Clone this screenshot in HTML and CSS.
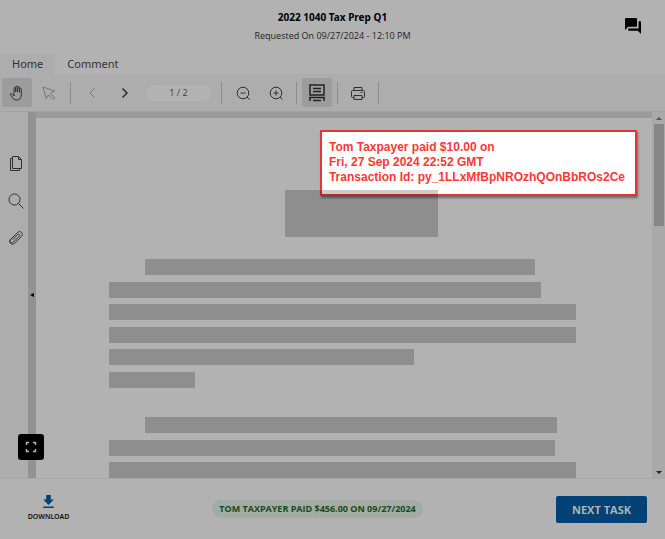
FILE: index.html
```html
<!DOCTYPE html>
<html lang="en">
<head>
    <meta charset="UTF-8">
    <meta name="viewport" content="width=device-width, initial-scale=1.0">
    <title>2022 1040 Tax Prep Q1</title>
    <link rel="stylesheet" href="styles.css">
</head>
<body>
    <header class="header">
        <div class="header-text">
            <h1>2022 1040 Tax Prep Q1</h1>
            <p>Requested On 09/27/2024 - 12:10 PM</p>
        </div>
        <button type="button" class="chat-button" aria-label="Messages">
            <svg width="16" height="16" viewBox="2 2 20 20" fill="#000"><path d="M21 6h-2v9H6v2c0 .55.45 1 1 1h11l4 4V7c0-.55-.45-1-1-1zm-4 6V3c0-.55-.45-1-1-1H3c-.55 0-1 .45-1 1v14l4-4h10c.55 0 1-.45 1-1z"/></svg>
        </button>
    </header>

    <nav class="tabs">
        <button type="button" class="tab active">Home</button>
        <button type="button" class="tab">Comment</button>
    </nav>

    <div class="toolbar">
        <button type="button" class="tool selected" aria-label="Hand">
            <svg width="16" height="16" viewBox="0 0 16 16"><path d="M5 9.500V3.600c0-1.400 1.700-1.400 1.700 0V7 2.200c0-1.500 1.900-1.500 1.900 0V7 2.700c0-1.400 1.900-1.400 1.900 0v4.600-3c0-1.300 1.800-1.300 1.800 0v5.500c0 3.200-1.500 5.200-4.500 5.200-2.200 0-3.400-.9-4.500-2.600L1.600 9.900c-.7-1.200.8-2 1.700-.9L5 11z"/></svg>
        </button>
        <button type="button" class="tool faded" aria-label="Select">
            <svg width="16" height="16" viewBox="0 0 16 16"><path d="M2 2l11.500 4-4.300 2.400 4.600 4.500-1.700 1.700-4.500-4.700-2.300 4z"/></svg>
        </button>
        <span class="divider first"></span>
        <button type="button" class="tool faded" aria-label="Previous page">
            <svg width="16" height="16" viewBox="0 0 16 16"><path d="M10.500 3.500L6 8l4.500 4.500"/></svg>
        </button>
        <button type="button" class="tool next" aria-label="Next page">
            <svg width="16" height="16" viewBox="0 0 16 16"><path d="M5.500 3.500L10 8l-4.500 4.500"/></svg>
        </button>
        <input type="text" class="page-input" value="1 / 2" aria-label="Page">
        <span class="divider"></span>
        <button type="button" class="tool zoom-tool" aria-label="Zoom out">
            <svg width="16" height="16" viewBox="0 0 16 16"><circle cx="8" cy="8" r="5.800"/><path d="M5.500 8h5M12 12l2.500 2.500"/></svg>
        </button>
        <button type="button" class="tool zoom-tool" aria-label="Zoom in">
            <svg width="16" height="16" viewBox="0 0 16 16"><circle cx="8" cy="8" r="5.800"/><path d="M5.500 8h5M8 5.500v5M12 12l2.500 2.500"/></svg>
        </button>
        <span class="divider"></span>
        <button type="button" class="tool selected scroll-tool" aria-label="Continuous scroll">
            <svg width="18" height="18" viewBox="0 0 18 18"><path d="M2 1h14v10H2zM5 4.500h8M5 7.500h8M1 13.500h16M2 17v-3.500M16 17v-3.500M5 16.500h8"/></svg>
        </button>
        <span class="divider"></span>
        <button type="button" class="tool print-tool" aria-label="Print">
            <svg width="16" height="16" viewBox="0 0 16 16"><path d="M4 5.500v-3h8v3M4 12.500H2.500c-.6 0-1-.4-1-1v-5c0-.6.400-1 1-1h11c.6 0 1 .4 1 1v5c0 .6-.4 1-1 1H12M4 10.500h8v4H4zM10.500 7.500h2"/></svg>
        </button>
        <span class="divider last"></span>
    </div>

    <main class="viewer">
        <aside class="sidebar">
            <button type="button" class="side-button" aria-label="Pages">
                <svg width="16" height="16" viewBox="0 0 16 16"><path d="M4.500 .5h6l3 3v9h-9zM10.500 .5v3h3M4.500 2.500h-2v12h9v-2"/></svg>
            </button>
            <button type="button" class="side-button" aria-label="Search">
                <svg width="16" height="16" viewBox="0 0 16 16"><circle cx="6.500" cy="6.500" r="5.500"/><path d="M10.500 10.500l5 5"/></svg>
            </button>
            <button type="button" class="side-button" aria-label="Attachments">
                <svg width="16" height="16" viewBox="0 0 16 16"><path d="M4.500 9.700L9.700 4.500c1.100-1.100 2.700.5 1.600 1.600l-6 6c-2 2-4.700-.7-2.700-2.700l6.700-6.700c3.100-3 6.900.9 4 3.900l-6.500 6.500c-2.900 2.900-7-.8-4.300-3.900"/></svg>
            </button>
            <button type="button" class="expand-button" aria-label="Full screen">
                <svg width="12" height="12" viewBox="0 0 12 12"><path d="M1.500 4V1.500H4M8 1.500h2.500V4M10.500 8v2.500H8M4 10.500H1.500V8"/></svg>
            </button>
        </aside>
        <div class="splitter"><span class="splitter-arrow"></span></div>

        <div class="document">
            <div class="stamp">
                Tom Taxpayer paid $10.00 on<br>
                Fri, 27 Sep 2024 22:52 GMT<br>
                Transaction Id: py_1LLxMfBpNROzhQOnBbROs2Ce
            </div>
            <div class="title-block"></div>
            <div class="paragraph">
                <div class="line indent w-390"></div>
                <div class="line w-432"></div>
                <div class="line"></div>
                <div class="line"></div>
                <div class="line w-305"></div>
                <div class="line w-86"></div>
            </div>
            <div class="paragraph short">
                <div class="line indent w-412"></div>
                <div class="line w-446"></div>
                <div class="line"></div>
            </div>
        </div>

        <div class="scrollbar">
            <span class="arrow-up"></span>
            <div class="thumb"></div>
            <span class="arrow-down"></span>
        </div>
    </main>

    <footer class="footer">
        <button type="button" class="download-button">
            <svg width="11" height="13" viewBox="0 0 14 17" fill="#004276"><path d="M14 6h-4V0H4v6H0l7 7zM0 15v2h14v-2z"/></svg>
            DOWNLOAD
        </button>
        <span class="badge">TOM TAXPAYER PAID $456.00 ON 09/27/2024</span>
        <button type="button" class="next-button">NEXT TASK</button>
    </footer>
</body>
</html>
```
FILE: styles.css
```css
/* Global Styles */
* {
    margin: 0;
    padding: 0;
    box-sizing: border-box;
}
body {
    font-family: 'Open Sans', 'Noto Sans', sans-serif;
    display: flex;
    flex-direction: column;
    height: 100vh;
    background: #b2b2b2;
    color: #000;
}
button {
    border: none;
    background: none;
    font-family: inherit;
    cursor: pointer;
}
svg {
    display: block;
    flex: none;
}

/* Header */
.header {
    position: relative;
    height: 54px;
    padding-top: 8px;
    text-align: center;
}
h1 {
    font-family: 'Noto Sans', sans-serif;
    font-size: 10px;
    line-height: 18px;
}
.header p {
    font-size: 9px;
    line-height: 20px;
    color: #222;
}
.chat-button {
    position: absolute;
    top: 18px;
    right: 24px;
}

/* Tabs */
.tabs {
    display: flex;
    height: 20px;
}
.tab {
    padding: 0 12px;
    font-family: 'Noto Sans', sans-serif;
    font-size: 11px;
    line-height: 20px;
    color: #333;
}
.tab.active {
    background: #adadad;
}

/* Toolbar */
.toolbar {
    display: flex;
    align-items: center;
    height: 38px;
    padding-left: 2px;
    background: #adadad;
    border-bottom: 1px solid #a1a1a1;
}
.tool {
    display: flex;
    align-items: center;
    justify-content: center;
    width: 30px;
    height: 29px;
    border-radius: 2px;
}
.tool svg, .side-button svg {
    fill: none;
    stroke: #303030;
    stroke-width: 1;
}
.tool.selected {
    background: #9c9c9c;
}
.tool.faded {
    width: 34px;
}
.tool.faded svg {
    stroke: #777;
}
.tool.next {
    width: 32px;
}
.tool.next svg {
    stroke-width: 1.5;
}
.tool.zoom-tool {
    width: 33px;
}
.scroll-tool {
    margin: 0 5px;
}
.scroll-tool svg {
    stroke: #222;
    stroke-width: 1.5;
}
.print-tool {
    margin: 0 5px;
}
.divider {
    width: 1px;
    height: 22px;
    background: #8c8c8c;
}
.divider.first {
    margin: 0 4px;
}
.zoom-tool + .divider {
    margin-left: 4px;
}
.page-input {
    width: 65px;
    height: 16px;
    margin: 0 10px 0 5px;
    border: none;
    border-radius: 8px;
    background: #b2b2b2;
    color: #444;
    font-family: 'Noto Sans', sans-serif;
    font-size: 9px;
    text-align: center;
}
.page-input + .divider {
    margin-right: 4px;
}

/* Viewer */
.viewer {
    display: flex;
    flex: 1;
    min-height: 0;
}
.sidebar {
    position: relative;
    display: flex;
    flex-direction: column;
    align-items: center;
    gap: 5px;
    width: 28px;
    padding-top: 36px;
    background: #adadad;
}
.side-button {
    display: flex;
    align-items: center;
    justify-content: center;
    width: 28px;
    height: 32px;
    padding-left: 3px;
}
.expand-button {
    position: absolute;
    z-index: 2;
    left: 18px;
    bottom: 18px;
    display: flex;
    align-items: center;
    justify-content: center;
    width: 26px;
    height: 26px;
    border-radius: 3px;
    background: #000;
}
.expand-button svg {
    fill: none;
    stroke: #b2b2b2;
    stroke-width: 1.5;
}
.splitter {
    display: flex;
    align-items: center;
    justify-content: center;
    width: 8px;
    background: #929292;
}
.splitter-arrow {
    border: 2px solid transparent;
    border-left: none;
    border-right: 4px solid #000;
}

/* Document */
.document {
    position: relative;
    flex: 1;
    min-width: 0;
    padding: 72px 76px 0 73px;
    border-top: 6px solid #9a9c9c;
    overflow: hidden;
}
.stamp {
    position: absolute;
    top: 12px;
    right: 15px;
    padding: 8px 10px 9px 7px;
    border: 2px solid #e83333;
    background: #fff;
    box-shadow: 1px 2px 2px rgba(0, 0, 0, 0.4);
    color: #ff3737;
    font-family: 'Liberation Sans', Arial, sans-serif;
    font-size: 12px;
    font-weight: bold;
    line-height: 15px;
    white-space: nowrap;
}
.title-block {
    position: relative;
    width: 153px;
    height: 47px;
    margin: 0 auto 22px 176px;
    background: rgba(0, 0, 0, 0.2);
}
.paragraph {
    display: flex;
    flex-direction: column;
    justify-content: space-between;
    height: 129px;
    margin-bottom: 29px;
}
.paragraph.short {
    height: 61px;
    margin-bottom: 0;
}
.line {
    height: 16px;
    background: #8e8e8e;
}
.indent {
    margin-left: 36px;
}
.w-86 {
    width: 86px;
}
.w-305 {
    width: 305px;
}
.w-390 {
    width: 390px;
}
.w-412 {
    width: 412px;
}
.w-432 {
    width: 432px;
}
.w-446 {
    width: 446px;
}

/* Scrollbar */
.scrollbar {
    display: flex;
    flex-direction: column;
    align-items: center;
    width: 13px;
    padding: 5px 1px 4px;
    background: #a9a9a9;
}
.thumb {
    width: 10px;
    height: 102px;
    margin: 4px 0 auto;
    background: #868686;
}
.arrow-up {
    border: 3px solid transparent;
    border-top: none;
    border-bottom: 3px solid #555;
}
.arrow-down {
    border: 3px solid transparent;
    border-bottom: none;
    border-top: 3px solid #222;
}

/* Footer */
.footer {
    display: flex;
    align-items: center;
    justify-content: space-between;
    height: 61px;
    padding: 0 18px 0 26px;
    border-top: 1px solid #a8a8a8;
}
.download-button {
    display: flex;
    flex-direction: column;
    align-items: center;
    gap: 3px;
    width: 45px;
    font-family: 'Noto Sans', sans-serif;
    font-size: 7px;
    font-weight: 600;
    line-height: 12px;
    color: #111;
}
.badge {
    margin-left: 8px;
    padding: 0 7px;
    border-radius: 9px;
    background: #a3aca3;
    color: #19491c;
    font-size: 9px;
    font-weight: bold;
    line-height: 18px;
}
.next-button {
    width: 91px;
    height: 27px;
    border-radius: 2px;
    background: #004276;
    color: #b2b2b2;
    font-size: 11px;
    font-weight: bold;
}
```
